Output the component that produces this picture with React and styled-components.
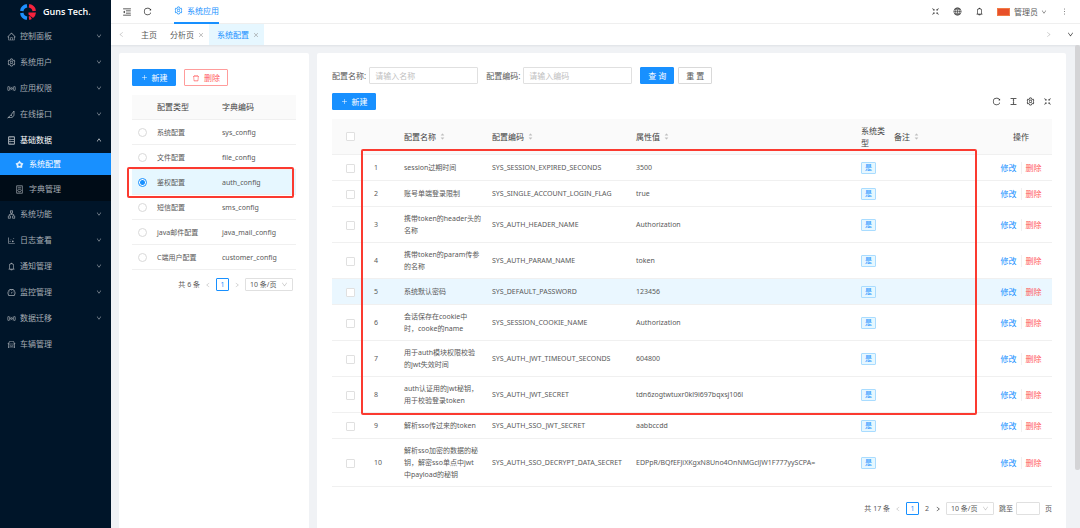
import React, { useState } from "react";
import styled, { createGlobalStyle, css } from "styled-components";
import {
  AiOutlineHome,
  AiOutlineSetting,
  AiOutlineDatabase,
  AiOutlineApartment,
  AiOutlineDotChart,
  AiOutlineBell,
  AiOutlineDashboard,
  AiOutlineCar,
  AiOutlineContainer,
  AiOutlineDown,
  AiOutlineUp,
  AiOutlineLeft,
  AiOutlineRight,
  AiOutlineClose,
  AiOutlineMenuFold,
  AiOutlineReload,
  AiOutlineFullscreenExit,
  AiOutlineGlobal,
  AiOutlineMore,
  AiOutlinePlus,
  AiOutlineDelete,
  AiOutlineColumnHeight,
  AiFillCaretUp,
  AiFillCaretDown,
} from "react-icons/ai";

const GlobalStyle = createGlobalStyle`
  * {
    box-sizing: border-box;
  }

  html,
  body,
  #root {
    height: 100%;
    margin: 0;
  }

  body {
    overflow: hidden;
    background: #f0f2f5;
    color: #595959;
    font-family: "Noto Sans", "Noto Sans CJK SC", sans-serif;
    font-size: 8px;
    line-height: 12px;
  }

  button,
  input,
  select {
    margin: 0;
    font: inherit;
    color: inherit;
  }

  ul {
    list-style: none;
    margin: 0;
    padding: 0;
  }

  a {
    color: inherit;
    text-decoration: none;
  }

  svg {
    display: block;
    flex: none;
  }
`;

const Layout = styled.div`
  display: flex;
  height: 100vh;
`;

/* ---------- sidebar ---------- */

const Sidebar = styled.aside`
  width: 111px;
  flex: none;
  background: #001529;
  color: #a6adb4;
`;

const Brand = styled.div`
  display: flex;
  align-items: center;
  gap: 6px;
  height: 23px;
  padding-left: 19px;
  color: #fff;
  font-family: "Open Sans", sans-serif;
  font-size: 9px;
  font-weight: 600;
`;

const MenuLink = styled.a`
  display: flex;
  align-items: center;
  gap: 4px;
  height: 26px;
  padding: 0 9px 0 7px;
  color: ${(p) => (p.$open ? "#fff" : "inherit")};

  span {
    flex: 1;
  }
`;

const SubMenu = styled.ul`
  display: grid;
  gap: 3px;
  padding-bottom: 1px;
  background: #000c17;
`;

const SubLink = styled.a`
  display: flex;
  align-items: center;
  gap: 5px;
  height: 22px;
  padding-left: 15px;
  background: ${(p) => (p.$active ? "#1890ff" : "transparent")};
  color: ${(p) => (p.$active ? "#fff" : "inherit")};
`;

/* ---------- header ---------- */

const Page = styled.div`
  flex: 1;
  min-width: 0;
  display: flex;
  flex-direction: column;
`;

const TopBar = styled.header`
  display: flex;
  align-items: center;
  height: 24px;
  flex: none;
  padding: 0 11px;
  background: #fff;
  border-bottom: 1px solid #f0f0f0;
`;

const IconButton = styled.button`
  display: flex;
  padding: 0;
  border: 0;
  background: none;
  color: ${(p) => (p.$muted ? "#bfbfbf" : "#262626")};
`;

const BarGroup = styled.div`
  display: flex;
  align-items: center;
  gap: ${(p) => p.$gap}px;
`;

const AppTab = styled.a`
  display: flex;
  align-items: center;
  gap: 4px;
  height: 24px;
  margin-left: 22px;
  border-bottom: 2px solid #1890ff;
  color: #1890ff;
`;

const UserMenu = styled.button`
  display: flex;
  align-items: center;
  gap: 3px;
  padding: 0;
  border: 0;
  background: none;
`;

const Avatar = styled.span`
  width: 13px;
  height: 8px;
  margin-right: 1px;
  background: #e8502a;
  border: 1px solid #f07a45;
`;

const Spacer = styled.div`
  flex: 1;
`;

const TabBar = styled.nav`
  display: flex;
  align-items: center;
  height: 21px;
  flex: none;
  padding: 0 6px 0 7px;
  background: #fff;
  box-shadow: 0 1px 2px rgba(0, 21, 41, 0.08);
`;

const PageTabs = styled.div`
  display: flex;
  margin-left: 8px;
`;

const PageTab = styled.a`
  display: flex;
  align-items: center;
  gap: 4px;
  height: 21px;
  padding: 0 5px 0 8px;
  background: ${(p) => (p.$active ? "#e6f7ff" : "transparent")};
  color: ${(p) => (p.$active ? "#1890ff" : "inherit")};

  svg {
    color: #8c8c8c;
  }
`;

/* ---------- content ---------- */

const Content = styled.main`
  display: flex;
  flex: 1;
  min-height: 0;
`;

const Panels = styled.div`
  display: flex;
  flex: 1;
  gap: 8px;
  min-width: 0;
  padding: 8px 9px 0 8px;
`;

const ScrollThumb = styled.div`
  width: 5px;
  height: 88%;
  border-radius: 2px;
  background: #d4d4d6;
`;

const Card = styled.section`
  flex: ${(p) => (p.$side ? "0 0 190px" : "1")};
  min-width: 0;
  padding: ${(p) => (p.$side ? "16px 13px 0" : "14px 14px 0 15px")};
  border-radius: 2px 2px 0 0;
  background: #fff;
`;

const Toolbar = styled.div`
  display: flex;
  align-items: center;
  justify-content: ${(p) => (p.$spread ? "space-between" : "flex-start")};
  gap: 8px;
  margin-bottom: 9px;
`;

const Button = styled.button`
  display: flex;
  align-items: center;
  justify-content: center;
  gap: 4px;
  width: ${(p) => p.$width || 44}px;
  height: 17px;
  padding: 0;
  border: 1px solid #d9d9d9;
  border-radius: 1px;
  background: #fff;
  white-space: pre;

  ${(p) =>
    p.$primary &&
    css`
      border-color: #1890ff;
      background: #1890ff;
      color: #fff;
    `}

  ${(p) =>
    p.$danger &&
    css`
      border-color: #ff9c9b;
      color: #ff5c5e;
    `}
`;

const Field = styled.label`
  display: flex;
  align-items: center;
  gap: 3px;
  white-space: nowrap;
`;

const TextInput = styled.input`
  width: ${(p) => p.$width}px;
  height: ${(p) => p.$height || 17}px;
  padding: 0 5px;
  border: 1px solid #e0e0e0;
  border-radius: 1px;
  outline: 0;

  &::placeholder {
    color: #bfbfbf;
  }
`;

const TableWrap = styled.div`
  position: relative;
`;

/* red frame laid over the rows being explained */
const Marker = styled.div`
  position: absolute;
  top: ${(p) => p.$top}px;
  left: ${(p) => p.$left}px;
  right: ${(p) => p.$right}px;
  height: ${(p) => p.$height}px;
  border: 2px solid #fb3a30;
  border-radius: 2px;
  pointer-events: none;
`;

const Table = styled.table`
  width: 100%;
  table-layout: fixed;
  border-collapse: separate;
  border-spacing: 0;

  th {
    height: ${(p) => p.$head}px;
    padding: 0 0 0 6px;
    border-bottom: 1px solid #f0f0f0;
    background: #fafafa;
    color: #434343;
    font-weight: 400;
    text-align: left;
  }

  td {
    height: ${(p) => p.$row}px;
    padding: 6px 0 5px 6px;
    border-bottom: 1px solid #f0f0f0;
    font-size: 7px;
    white-space: pre-line;
  }
`;

const Row = styled.tr`
  background: ${(p) => p.$bg || "#fff"};
`;

const Sortable = styled.span`
  display: flex;
  align-items: center;
  gap: 4px;
  white-space: nowrap;
`;

const Carets = styled.span`
  display: flex;
  flex-direction: column;
  color: #bfbfbf;

  svg + svg {
    margin-top: -1px;
  }
`;

const Radio = styled.input`
  appearance: none;
  display: block;
  width: 9px;
  height: 9px;
  border: 1px solid ${(p) => (p.checked ? "#1890ff" : "#d9d9d9")};
  border-radius: 50%;
  background: ${(p) =>
    p.checked ? "radial-gradient(#1890ff 0 2px, #fff 3px)" : "#fff"};
`;

const Checkbox = styled.input`
  appearance: none;
  display: block;
  width: 9px;
  height: 9px;
  margin-left: 8px;
  border: 1px solid #e0e0e0;
  border-radius: 1px;
  background: #fff;
`;

const Tag = styled.span`
  display: inline-block;
  height: 12px;
  padding: 0 3px;
  border: 1px solid #a9dcff;
  border-radius: 1px;
  background: #e6f7ff;
  color: #1890ff;
  font-size: 7px;
  line-height: 10px;
  vertical-align: top;
`;

const Actions = styled.div`
  display: flex;
  justify-content: center;
  gap: 4px;
  font-size: 8px;
`;

const ActionLink = styled.a`
  color: ${(p) => (p.$danger ? "#ff5c5e" : "#1890ff")};

  & + & {
    padding-left: 4px;
    border-left: 1px solid #f0f0f0;
  }
`;

const Pager = styled.div`
  display: flex;
  align-items: center;
  justify-content: flex-end;
  gap: 5px;
  margin-top: ${(p) => p.$above}px;
  padding-right: ${(p) => p.$inset || 0}px;
  font-size: 7px;
  white-space: nowrap;
`;

const PageNumber = styled.button`
  width: ${(p) => (p.$current ? 13 : 6)}px;
  height: 13px;
  padding: 0;
  border: ${(p) => (p.$current ? "1px solid #1890ff" : "0")};
  border-radius: 1px;
  background: none;
  color: ${(p) => (p.$current ? "#1890ff" : "inherit")};
  line-height: 11px;
`;

const SizeSelect = styled.span`
  position: relative;

  select {
    appearance: none;
    display: block;
    width: 48px;
    height: 13px;
    padding: 0 0 0 4px;
    border: 1px solid #e0e0e0;
    border-radius: 1px;
    background: #fff;
    line-height: 11px;
  }

  svg {
    position: absolute;
    top: 3px;
    right: 5px;
    color: #bfbfbf;
    pointer-events: none;
  }
`;

const SignalIcon = () => (
  <svg width="9" height="9" viewBox="0 0 18 18" fill="none" stroke="currentColor" strokeWidth="1.6">
    <path d="M3 4 C1 7 1 11 3 14 M15 4 C17 7 17 11 15 14 M5.5 5 V13 M12.5 5 V13" />
    <circle cx="9" cy="9" r="1.6" />
  </svg>
);

const WedgeIcon = () => (
  <svg width="9" height="9" viewBox="0 0 18 18" fill="none" stroke="currentColor" strokeWidth="1.6">
    <path d="M1 16 L7 11 L14 2 V9 C14 13 11 15 7 15 H2 M8 10 L10 12" />
  </svg>
);

const FlowerIcon = () => (
  <svg width="9" height="9" viewBox="0 0 16 16">
    <path
      d="M8 1 L10.6 4.6 L15 6 L13 9.6 L12.6 14.4 L8 13.4 L3.4 14.4 L3 9.6 L1 6 L5.4 4.6 Z"
      fill="currentColor"
      fillOpacity="0.85"
    />
    <circle cx="8" cy="8.6" r="2.2" fill="#1890ff" />
  </svg>
);

const Logo = () => (
  <svg width="18" height="18" viewBox="0 0 36 36" fill="none" strokeWidth="7">
    <path d="M5.5 16 A12.6 12.6 0 0 1 16 5.5" stroke="#1e90ff" />
    <path d="M20 5.5 A12.6 12.6 0 0 1 30.5 16" stroke="#f5223d" />
    <path d="M16 30.5 A12.6 12.6 0 0 1 5.5 20" stroke="#1e90ff" />
    <path d="M19 19 H34 A15 15 0 0 1 28 30 L19 23 Z" fill="#f5223d" />
    <path d="M24 29 A12.6 12.6 0 0 1 20 30.5" stroke="#f5223d" />
  </svg>
);

const menu = [
  { label: "控制面板", icon: AiOutlineHome },
  { label: "系统用户", icon: AiOutlineSetting },
  { label: "应用权限", icon: SignalIcon },
  { label: "在线接口", icon: WedgeIcon },
  {
    label: "基础数据",
    icon: AiOutlineDatabase,
    children: [
      { label: "系统配置", icon: FlowerIcon, active: true },
      { label: "字典管理", icon: AiOutlineContainer },
    ],
  },
  { label: "系统功能", icon: AiOutlineApartment },
  { label: "日志查看", icon: AiOutlineDotChart },
  { label: "通知管理", icon: AiOutlineBell },
  { label: "监控管理", icon: AiOutlineDashboard },
  { label: "数据迁移", icon: SignalIcon },
  { label: "车辆管理", icon: AiOutlineCar, leaf: true },
];

const types = [
  ["系统配置", "sys_config"],
  ["文件配置", "file_config"],
  ["鉴权配置", "auth_config"],
  ["短信配置", "sms_config"],
  ["java邮件配置", "java_mail_config"],
  ["C端用户配置", "customer_config"],
];

const configs = [
  ["session过期时间", "SYS_SESSION_EXPIRED_SECONDS", "3500"],
  ["账号单端登录限制", "SYS_SINGLE_ACCOUNT_LOGIN_FLAG", "true"],
  ["携带token的header头的\n名称", "SYS_AUTH_HEADER_NAME", "Authorization"],
  ["携带token的param传参\n的名称", "SYS_AUTH_PARAM_NAME", "token"],
  ["系统默认密码", "SYS_DEFAULT_PASSWORD", "123456"],
  ["会话保存在cookie中\n时，cooke的name", "SYS_SESSION_COOKIE_NAME", "Authorization"],
  ["用于auth模块权限校验\n的jwt失效时间", "SYS_AUTH_JWT_TIMEOUT_SECONDS", "604800"],
  ["auth认证用的jwt秘钥，\n用于校验登录token", "SYS_AUTH_JWT_SECRET", "tdn6zogtwtuxr0kl9i697bqxsj106l"],
  ["解析sso传过来的token", "SYS_AUTH_SSO_JWT_SECRET", "aabbccdd"],
  [
    "解析sso加密的数据的秘\n钥，解密sso单点中jwt\n中payload的秘钥",
    "SYS_AUTH_SSO_DECRYPT_DATA_SECRET",
    "EDPpR/BQfEFJiXKgxN8Uno4OnNMGclJW1F777yySCPA=",
  ],
];

const SortHead = ({ children }) => (
  <Sortable>
    {children}
    <Carets>
      <AiFillCaretUp size={5} />
      <AiFillCaretDown size={5} />
    </Carets>
  </Sortable>
);

const PageSize = () => (
  <SizeSelect>
    <select aria-label="每页条数" defaultValue="10">
      <option value="10">10 条/页</option>
      <option value="20">20 条/页</option>
    </select>
    <AiOutlineDown size={7} />
  </SizeSelect>
);

const App = () => {
  const [selected, setSelected] = useState("auth_config");

  return (
    <Layout>
      <GlobalStyle />
      <Sidebar>
        <Brand>
          <Logo />
          Guns Tech.
        </Brand>
        <ul>
          {menu.map(({ label, icon: Icon, children, leaf }) => (
            <li key={label}>
              <MenuLink href="#" $open={!!children}>
                <Icon size={9} />
                <span>{label}</span>
                {!leaf && (children ? <AiOutlineUp size={6} /> : <AiOutlineDown size={6} />)}
              </MenuLink>
              {children && (
                <SubMenu>
                  {children.map(({ label: name, icon: SubIcon, active }) => (
                    <li key={name}>
                      <SubLink href="#" $active={active}>
                        <SubIcon size={9} />
                        {name}
                      </SubLink>
                    </li>
                  ))}
                </SubMenu>
              )}
            </li>
          ))}
        </ul>
      </Sidebar>

      <Page>
        <TopBar>
          <BarGroup $gap={11}>
            <IconButton aria-label="收起菜单">
              <AiOutlineMenuFold size={10} />
            </IconButton>
            <IconButton aria-label="刷新">
              <AiOutlineReload size={9} />
            </IconButton>
          </BarGroup>
          <AppTab href="#">
            <AiOutlineSetting size={9} />
            系统应用
          </AppTab>
          <Spacer />
          <BarGroup $gap={13}>
            <IconButton aria-label="全屏">
              <AiOutlineFullscreenExit size={9} />
            </IconButton>
            <IconButton aria-label="语言">
              <AiOutlineGlobal size={9} />
            </IconButton>
            <IconButton aria-label="消息">
              <AiOutlineBell size={9} />
            </IconButton>
            <UserMenu>
              <Avatar />
              管理员
              <AiOutlineDown size={6} />
            </UserMenu>
            <IconButton aria-label="更多">
              <AiOutlineMore size={9} />
            </IconButton>
          </BarGroup>
        </TopBar>

        <TabBar>
          <IconButton $muted aria-label="向左">
            <AiOutlineLeft size={7} />
          </IconButton>
          <PageTabs>
            <PageTab href="#">主页</PageTab>
            <PageTab href="#">
              分析页
              <AiOutlineClose size={6} />
            </PageTab>
            <PageTab href="#" $active>
              系统配置
              <AiOutlineClose size={6} />
            </PageTab>
          </PageTabs>
          <Spacer />
          <BarGroup $gap={15}>
            <IconButton $muted aria-label="向右">
              <AiOutlineRight size={7} />
            </IconButton>
            <IconButton aria-label="标签菜单">
              <AiOutlineDown size={7} />
            </IconButton>
          </BarGroup>
        </TabBar>

        <Content>
          <Panels>
            <Card $side>
              <Toolbar>
                <Button $primary>
                  <AiOutlinePlus size={7} />
                  新建
                </Button>
                <Button $danger>
                  <AiOutlineDelete size={8} />
                  删除
                </Button>
              </Toolbar>
              <TableWrap>
                <Table $head={25} $row={25}>
                  <colgroup>
                    <col width="19" />
                    <col width="65" />
                    <col />
                  </colgroup>
                  <thead>
                    <tr>
                      <th />
                      <th>配置类型</th>
                      <th>字典编码</th>
                    </tr>
                  </thead>
                  <tbody>
                    {types.map(([name, code]) => (
                      <Row key={code} $bg={selected === code && "#e6f7ff"}>
                        <td>
                          <Radio
                            type="radio"
                            name="type"
                            aria-label={name}
                            checked={selected === code}
                            onChange={() => setSelected(code)}
                          />
                        </td>
                        <td>{name}</td>
                        <td>{code}</td>
                      </Row>
                    ))}
                  </tbody>
                </Table>
                <Marker $top={72} $left={-5} $right={2} $height={31} />
              </TableWrap>
              <Pager $above={8} $inset={3}>
                <span>共 6 条</span>
                <IconButton $muted aria-label="上一页">
                  <AiOutlineLeft size={6} />
                </IconButton>
                <PageNumber $current>1</PageNumber>
                <IconButton $muted aria-label="下一页">
                  <AiOutlineRight size={6} />
                </IconButton>
                <PageSize />
              </Pager>
            </Card>

            <Card>
              <Toolbar>
                <Field>
                  配置名称:
                  <TextInput $width={109} placeholder="请输入名称" />
                </Field>
                <Field>
                  配置编码:
                  <TextInput $width={109} placeholder="请输入编码" />
                </Field>
                <BarGroup $gap={4}>
                  <Button $primary $width={34}>
                    查 询
                  </Button>
                  <Button $width={34}>重 置</Button>
                </BarGroup>
              </Toolbar>
              <Toolbar $spread>
                <Button $primary>
                  <AiOutlinePlus size={7} />
                  新建
                </Button>
                <BarGroup $gap={8}>
                  <IconButton aria-label="刷新">
                    <AiOutlineReload size={9} />
                  </IconButton>
                  <IconButton aria-label="密度">
                    <AiOutlineColumnHeight size={9} />
                  </IconButton>
                  <IconButton aria-label="列设置">
                    <AiOutlineSetting size={9} />
                  </IconButton>
                  <IconButton aria-label="全屏">
                    <AiOutlineFullscreenExit size={9} />
                  </IconButton>
                </BarGroup>
              </Toolbar>
              <TableWrap>
                <Table $head={36} $row={26}>
                  <colgroup>
                    <col width="36" />
                    <col width="30" />
                    <col width="88" />
                    <col width="144" />
                    <col width="225" />
                    <col width="33" />
                    <col />
                    <col width="68" />
                  </colgroup>
                  <thead>
                    <tr>
                      <th>
                        <Checkbox type="checkbox" aria-label="全选" />
                      </th>
                      <th />
                      <th>
                        <SortHead>配置名称</SortHead>
                      </th>
                      <th>
                        <SortHead>配置编码</SortHead>
                      </th>
                      <th>
                        <SortHead>属性值</SortHead>
                      </th>
                      <th>系统类型</th>
                      <th>
                        <SortHead>备注</SortHead>
                      </th>
                      <th>
                        <Actions>操作</Actions>
                      </th>
                    </tr>
                  </thead>
                  <tbody>
                    {configs.map(([name, code, value], i) => (
                      <Row key={code} $bg={i === 4 && "#eaf7ff"}>
                        <td>
                          <Checkbox type="checkbox" aria-label={code} />
                        </td>
                        <td>{i + 1}</td>
                        <td>{name}</td>
                        <td>{code}</td>
                        <td>{value}</td>
                        <td>
                          <Tag>是</Tag>
                        </td>
                        <td />
                        <td>
                          <Actions>
                            <ActionLink href="#">修改</ActionLink>
                            <ActionLink href="#" $danger>
                              删除
                            </ActionLink>
                          </Actions>
                        </td>
                      </Row>
                    ))}
                  </tbody>
                </Table>
                <Marker $top={30} $left={29} $right={75} $height={266} />
              </TableWrap>
              <Pager $above={15}>
                <span>共 17 条</span>
                <IconButton $muted aria-label="上一页">
                  <AiOutlineLeft size={6} />
                </IconButton>
                <PageNumber $current>1</PageNumber>
                <PageNumber>2</PageNumber>
                <IconButton aria-label="下一页">
                  <AiOutlineRight size={6} />
                </IconButton>
                <PageSize />
                <Field>
                  跳至
                  <TextInput $width={24} $height={13} />
                </Field>
                <span>页</span>
              </Pager>
            </Card>
          </Panels>
          <ScrollThumb />
        </Content>
      </Page>
    </Layout>
  );
};

export default App;
